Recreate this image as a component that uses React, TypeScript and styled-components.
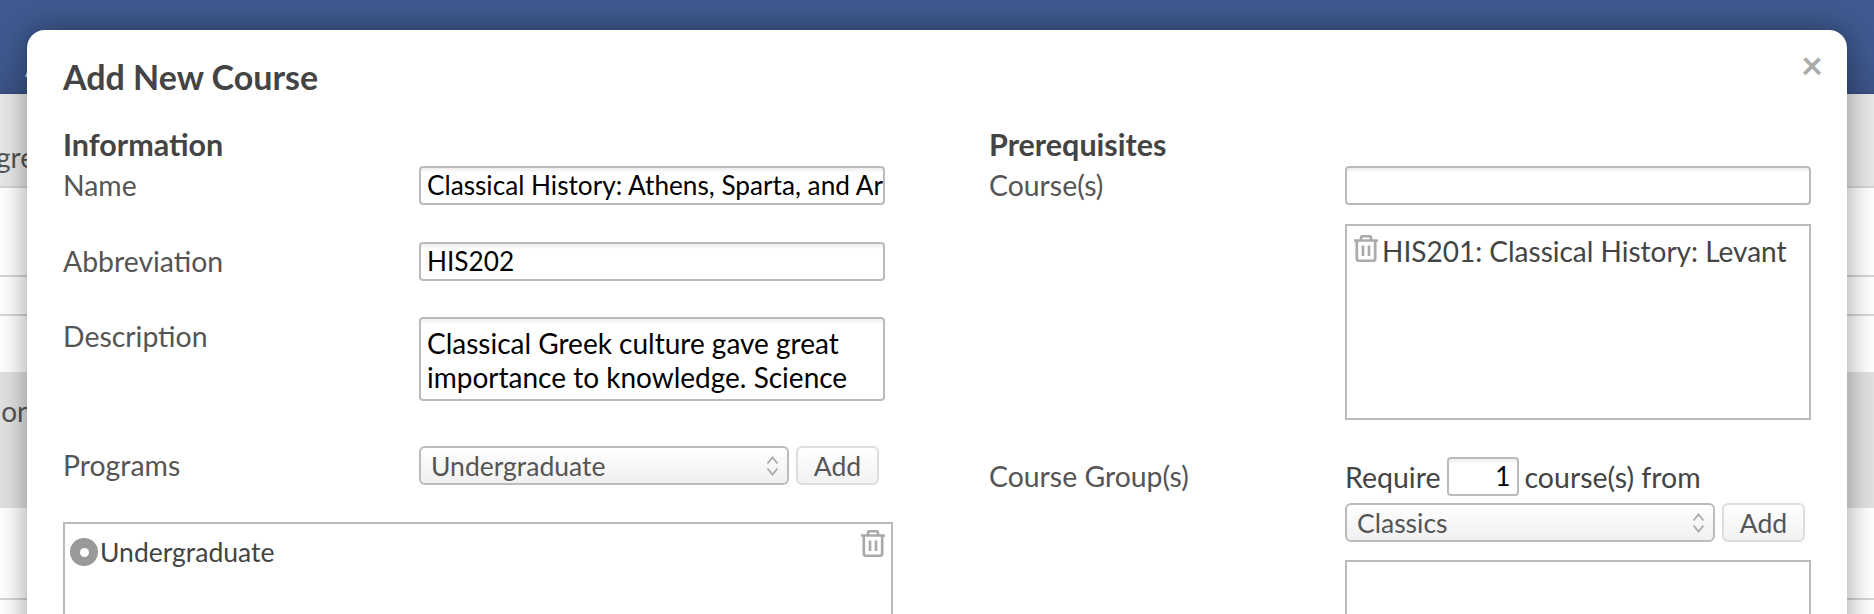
import { createGlobalStyle, styled } from "styled-components";

const GlobalStyle = createGlobalStyle`
  html, body {
    margin: 0;
    height: 100%;
    overflow: hidden;
    background: #fff;
    font-family: Lato, "Liberation Sans", sans-serif;
    color: #444;
  }
`;

const Page = styled.div`
  position: relative;
  width: 1874px;
  height: 614px;
  overflow: hidden;
`;

const TopBar = styled.header`
  box-sizing: border-box;
  height: 94px;
  padding: 49px 0 0 25px;
  background: linear-gradient(#3f5a90, #3f5a90 60%, #3b5285);
  border-bottom: 1px solid #33497a;
  color: #ddd;
  font-size: 28px;
  line-height: 34px;
`;

const BackRow = styled.div<{ $h: number; $top?: number; $bg?: string; $plain?: boolean }>`
  display: flex;
  align-items: flex-start;
  width: 100%;
  height: ${(p) => p.$h}px;
  box-sizing: border-box;
  padding-top: ${(p) => p.$top ?? 0}px;
  overflow: hidden;
  border-bottom: 2px solid ${(p) => (p.$plain ? "transparent" : "#d6d6d6")};
  background: ${(p) => p.$bg ?? "#fff"};
  color: #555;
  font-size: 28px;
  line-height: 38px;
`;

const BackText = styled.span<{ $shift: number }>`
  margin-left: -${(p) => p.$shift}px;
  white-space: nowrap;
`;

const Modal = styled.section`
  position: absolute;
  top: 30px;
  left: 27px;
  width: 1820px;
  height: 640px;
  box-sizing: border-box;
  padding: 27px 36px;
  background: #fff;
  border-radius: 18px;
  box-shadow: 0 0 30px rgba(0, 0, 0, 0.4);
`;

const Close = styled.span`
  position: absolute;
  top: 15px;
  right: 24px;
  color: #aaa;
  font-size: 38px;
  font-weight: 700;
  line-height: 1;
`;

const Title = styled.h2`
  margin: 0 0 29px;
  font-size: 34px;
  line-height: 40px;
  font-weight: 700;
  color: #444;
`;

const Columns = styled.div`
  display: grid;
  grid-template-columns: 830px 1fr;
  column-gap: 96px;
`;

const Column = styled.div`
  display: flex;
  flex-direction: column;
`;

const Heading = styled.h3`
  margin: 0 0 3px;
  font-size: 30.5px;
  line-height: 37px;
  font-weight: 700;
  color: #444;
`;

const Row = styled.div<{ $gap: number }>`
  display: grid;
  grid-template-columns: 356px 1fr;
  margin-bottom: ${(p) => p.$gap}px;
`;

const Label = styled.label`
  font-size: 28.4px;
  line-height: 38px;
  color: #555;
`;

const TextInput = styled.div<{ $w: number; $right?: boolean }>`
  box-sizing: border-box;
  width: ${(p) => p.$w}px;
  height: 39px;
  padding: 0 6px;
  overflow: hidden;
  white-space: nowrap;
  border: 2px solid #bbb;
  border-radius: 4px;
  background: linear-gradient(#eee, #fff 5px);
  color: #000;
  font-size: 26.2px;
  line-height: 35px;
  text-align: ${(p) => (p.$right ? "right" : "left")};
`;

const TextArea = styled.div`
  box-sizing: border-box;
  width: 466px;
  height: 84px;
  padding: 7px 6px;
  overflow: hidden;
  border: 2px solid #bbb;
  border-radius: 4px;
  background: linear-gradient(#eee, #fff 5px);
  color: #000;
  font-size: 28px;
  line-height: 34px;
`;

const PickRow = styled.div`
  display: flex;
  gap: 7px;
`;

const Select = styled.div`
  display: flex;
  align-items: center;
  justify-content: space-between;
  box-sizing: border-box;
  width: 370px;
  height: 39px;
  padding: 0 8px 0 10px;
  border: 2px solid #bbb;
  border-radius: 6px;
  background: linear-gradient(#fff, #f0f0f0);
  font-size: 26.5px;
  color: #555;
`;

const AddButton = styled.button`
  box-sizing: border-box;
  width: 83px;
  height: 39px;
  padding: 0;
  border: 2px solid #ddd;
  border-radius: 6px;
  background: linear-gradient(#fff, #f2f2f2);
  font-family: inherit;
  font-size: 26.5px;
  color: #555;
`;

const ListBox = styled.div<{ $w: number; $h: number; $size?: number; $mt?: number; $pad?: number }>`
  position: relative;
  display: flex;
  align-items: flex-start;
  box-sizing: border-box;
  width: ${(p) => p.$w}px;
  height: ${(p) => p.$h}px;
  margin-top: ${(p) => p.$mt ?? 0}px;
  padding: ${(p) => p.$pad ?? 6}px 5px;
  border: 2px solid #bbb;
  font-size: ${(p) => p.$size ?? 28}px;
  line-height: 38px;
  color: #444;
`;

const TrashCorner = styled.span`
  position: absolute;
  top: 6px;
  right: 6px;
  line-height: 0;
`;

const ListTrash = styled.span`
  flex: none;
  margin: 3px 4px 0 2px;
  line-height: 0;
`;

const Bullet = styled.span`
  flex: none;
  display: flex;
  align-items: center;
  justify-content: center;
  width: 28px;
  height: 28px;
  margin: 5px 2px 0 0;
  border-radius: 50%;
  background: #999;

  &::after {
    content: "";
    width: 9px;
    height: 9px;
    border-radius: 50%;
    background: #fff;
  }
`;

const RequireRow = styled.div`
  display: flex;
  align-items: center;
  gap: 6px;
  height: 39px;
  margin-bottom: 7px;
  font-size: 28.5px;
  color: #444;
`;

function Chevrons() {
  return (
    <svg width="13" height="22" viewBox="0 0 13 22" fill="none" stroke="#aaa" strokeWidth="1.8">
      <path d="M1.500 8.500 6.500 2.500 11.500 8.500M1.500 13.500 6.500 19.500 11.500 13.500" />
    </svg>
  );
}

function Trash() {
  return (
    <svg width="24" height="27" viewBox="0 0 24 27" fill="none" stroke="#aaa" strokeWidth="2.7">
      <path d="M0 5.500h24M7 5.500V3q0-1.800 1.800-1.800h6.400Q17 1.200 17 3v2.500M2.800 5.500v17.700q0 2.600 2.600 2.600h13.200q2.600 0 2.600-2.600V5.500M9 10.500v10.500M15 10.500v10.500" />
    </svg>
  );
}

export default function App() {
  return (
    <Page>
      <GlobalStyle />
      <TopBar>A</TopBar>
      <BackRow $h={94} $top={44} $bg="#e8e8e8">
        <BackText $shift={46}>Progress</BackText>
      </BackRow>
      <BackRow $h={89} />
      <BackRow $h={39} />
      <BackRow $h={56} $plain />
      <BackRow $h={136} $top={20} $bg="#e2e2e2" $plain>
        <BackText $shift={48}>Action</BackText>
      </BackRow>
      <BackRow $h={92} />
      <Modal>
        <Close>×</Close>
        <Title>Add New Course</Title>
        <Columns>
          <Column>
            <Heading>Information</Heading>
            <Row $gap={37}>
              <Label>Name</Label>
              <TextInput $w={466}>Classical History: Athens, Sparta, and Ar</TextInput>
            </Row>
            <Row $gap={36}>
              <Label>Abbreviation</Label>
              <TextInput $w={466}>HIS202</TextInput>
            </Row>
            <Row $gap={45}>
              <Label>Description</Label>
              <TextArea>Classical Greek culture gave great importance to knowledge. Science</TextArea>
            </Row>
            <Row $gap={37}>
              <Label>Programs</Label>
              <PickRow>
                <Select>Undergraduate<Chevrons /></Select>
                <AddButton>Add</AddButton>
              </PickRow>
            </Row>
            <ListBox $w={830} $h={120} $size={26.5} $pad={9}>
              <Bullet />Undergraduate
              <TrashCorner><Trash /></TrashCorner>
            </ListBox>
          </Column>
          <Column>
            <Heading>Prerequisites</Heading>
            <Row $gap={19}>
              <Label>Course(s)</Label>
              <TextInput $w={466} />
            </Row>
            <Row $gap={37}>
              <span />
              <ListBox $w={466} $h={196}>
                <ListTrash><Trash /></ListTrash>HIS201: Classical History: Levant
              </ListBox>
            </Row>
            <Row $gap={0}>
              <Label>Course Group(s)</Label>
              <div>
                <RequireRow>Require <TextInput $w={72} $right>1</TextInput> course(s) from</RequireRow>
                <PickRow>
                  <Select>Classics<Chevrons /></Select>
                  <AddButton>Add</AddButton>
                </PickRow>
                <ListBox $w={466} $h={100} $mt={18} />
              </div>
            </Row>
          </Column>
        </Columns>
      </Modal>
    </Page>
  );
}
